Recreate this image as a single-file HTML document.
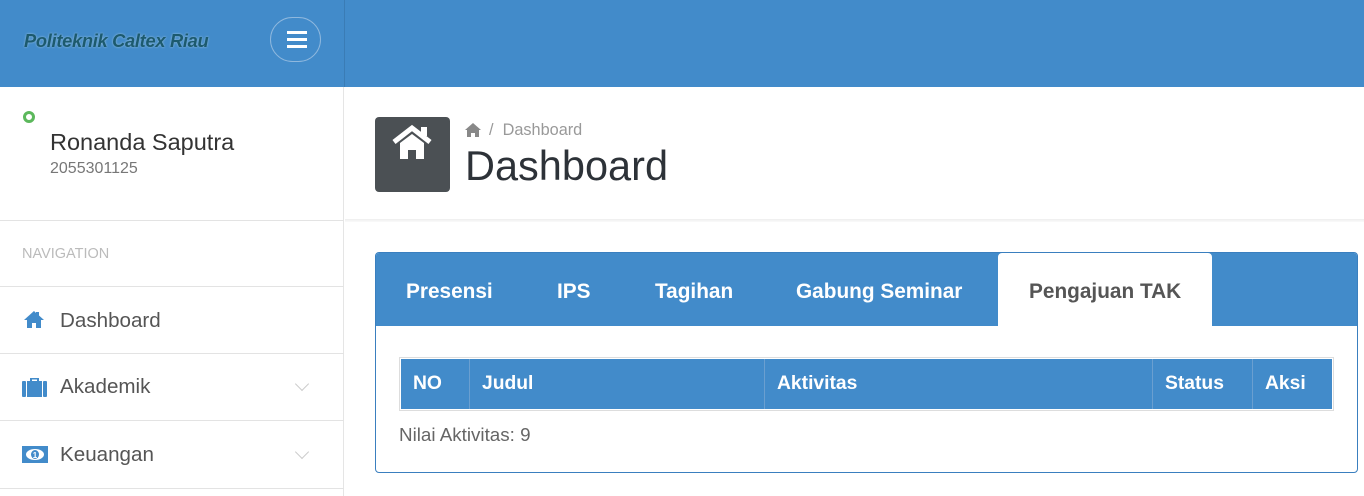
<!DOCTYPE html>
<html><head><style>
*{box-sizing:border-box;margin:0;padding:0}
body{width:1364px;height:496px;overflow:hidden;font-family:"Liberation Sans",sans-serif;background:#fff;position:relative}
.abs{position:absolute}
.hdr{left:0;top:0;width:1364px;height:87px;background:#428bca}
.sep{left:344px;top:0;width:1px;height:87px;background:#3a7cb5}
.logo{left:24px;top:30px;font:italic bold 18.3px "Liberation Sans",sans-serif;color:#1c5a6e;letter-spacing:-0.3px;text-shadow:0 0 2px #9fc4de}
.burger{left:270px;top:17px;width:51px;height:45px;border:1px solid #8fb8de;border-radius:23px}
.burger i{position:absolute;left:16px;width:20px;height:3px;background:#fff}
.side{left:0;top:87px;width:344px;height:409px;border-right:1px solid #e5e5e5}
.line{height:1px;background:#e3e3e3;left:0;width:344px}
.nav{left:60px;font-size:20.6px;color:#555}
.chev{left:297px;width:10px;height:10px;border-right:1.5px solid #ccc;border-bottom:1.5px solid #ccc;transform:rotate(45deg)}
.tab{top:27px;font-size:20.8px;font-weight:bold;color:#fff}
</style></head><body>
<div class="abs hdr"></div>
<div class="abs sep"></div>
<div class="abs logo">Politeknik Caltex Riau</div>
<div class="abs burger"><i style="top:13px"></i><i style="top:20px"></i><i style="top:27px"></i></div>

<div class="abs side"></div>
<div class="abs" style="left:23px;top:111px;width:12px;height:12px;border:3px solid #5cb85c;border-radius:50%"></div>
<div class="abs" style="left:50px;top:129px;font-size:23.5px;color:#333">Ronanda Saputra</div>
<div class="abs" style="left:50px;top:160px;font-size:16px;color:#777">2055301125</div>
<div class="abs line" style="top:220px"></div>
<div class="abs" style="left:22px;top:246px;font-size:14.5px;color:#bbb">NAVIGATION</div>
<div class="abs line" style="top:286px"></div>
<svg class="abs" style="left:23px;top:310px" width="22" height="18" viewBox="0 0 22 18"><path d="M11 1L1 10h3v8h5v-5h4v5h5v-8h3L16 5.5V2h-3v1z" fill="#428bca"/></svg>
<div class="abs nav" style="top:309px">Dashboard</div>
<div class="abs line" style="top:353px"></div>
<svg class="abs" style="left:22px;top:377px" width="25" height="20" viewBox="0 0 25 20"><path d="M8 4V1h9v3h-2V2.5h-5V4z" fill="#428bca"/><rect x="0" y="4" width="4" height="16" rx="1" fill="#428bca"/><rect x="5" y="4" width="15" height="16" fill="#428bca"/><rect x="21" y="4" width="4" height="16" rx="1" fill="#428bca"/></svg>
<div class="abs nav" style="top:375px">Akademik</div>
<div class="abs chev" style="top:379px"></div>
<div class="abs line" style="top:420px"></div>
<svg class="abs" style="left:22px;top:446px" width="26" height="17" viewBox="0 0 26 17"><rect width="26" height="17" fill="#428bca"/><ellipse cx="13" cy="8.5" rx="9" ry="5.5" fill="#fff"/><ellipse cx="13" cy="8.5" rx="4" ry="4.5" fill="#428bca"/><text x="13" y="12" font-size="8" font-weight="bold" fill="#fff" text-anchor="middle" font-family="Liberation Sans">1</text></svg>
<div class="abs nav" style="top:443px">Keuangan</div>
<div class="abs chev" style="top:447px"></div>
<div class="abs line" style="top:488px"></div>

<div class="abs" style="left:345px;top:219px;width:1019px;height:3px;background:linear-gradient(#eee,#fafafa)"></div>
<div class="abs" style="left:375px;top:117px;width:75px;height:75px;background:#4b5054;border-radius:4px"></div>
<svg class="abs" style="left:390px;top:124px" width="44" height="38" viewBox="0 0 44 38"><path d="M4 18L22 4l18 14" stroke="#fff" stroke-width="5" fill="none"/><rect x="31" y="3" width="6" height="9" fill="#fff"/><path d="M10 19L22 10l12 9v16H26v-9h-8v9h-8z" fill="#fff"/></svg>
<svg class="abs" style="left:465px;top:123px" width="16" height="14" viewBox="0 0 16 14"><path d="M8 0L0 7h2v7h4v-4h4v4h4V7h2z" fill="#888"/></svg>
<div class="abs" style="left:489px;top:121px;font-size:16.3px;color:#999">/&nbsp; Dashboard</div>
<div class="abs" style="left:465px;top:142px;font-size:41.5px;color:#2d3238">Dashboard</div>

<div class="abs" style="left:375px;top:252px;width:983px;height:221px;border:1px solid #3a7fbf;border-radius:4px;overflow:hidden">
 <div class="abs" style="left:0;top:0;width:983px;height:73px;background:#428bca"></div>
 <div class="abs" style="left:622px;top:0;width:214px;height:74px;background:#fff;border-radius:4px 4px 0 0"></div>
 <div class="abs tab" style="left:30px">Presensi</div>
 <div class="abs tab" style="left:181px">IPS</div>
 <div class="abs tab" style="left:279px">Tagihan</div>
 <div class="abs tab" style="left:420px">Gabung Seminar</div>
 <div class="abs tab" style="left:653px;color:#555">Pengajuan TAK</div>
 <div class="abs" style="left:23px;top:104px;width:935px;height:54px;border:1px solid #ddd;padding:1px">
  <div style="display:flex;height:50px;background:#428bca;color:#fff;font-weight:bold;font-size:19.3px;line-height:50px">
   <div style="width:69px;padding-left:12px;border-right:1px solid #6a9fd0">NO</div>
   <div style="width:295px;padding-left:12px;border-right:1px solid #6a9fd0">Judul</div>
   <div style="width:388px;padding-left:12px;border-right:1px solid #6a9fd0">Aktivitas</div>
   <div style="width:100px;padding-left:12px;border-right:1px solid #6a9fd0">Status</div>
   <div style="flex:1;padding-left:12px">Aksi</div>
  </div>
 </div>
 <div class="abs" style="left:23px;top:171px;font-size:18.8px;color:#666">Nilai Aktivitas: 9</div>
</div>
</body></html>
